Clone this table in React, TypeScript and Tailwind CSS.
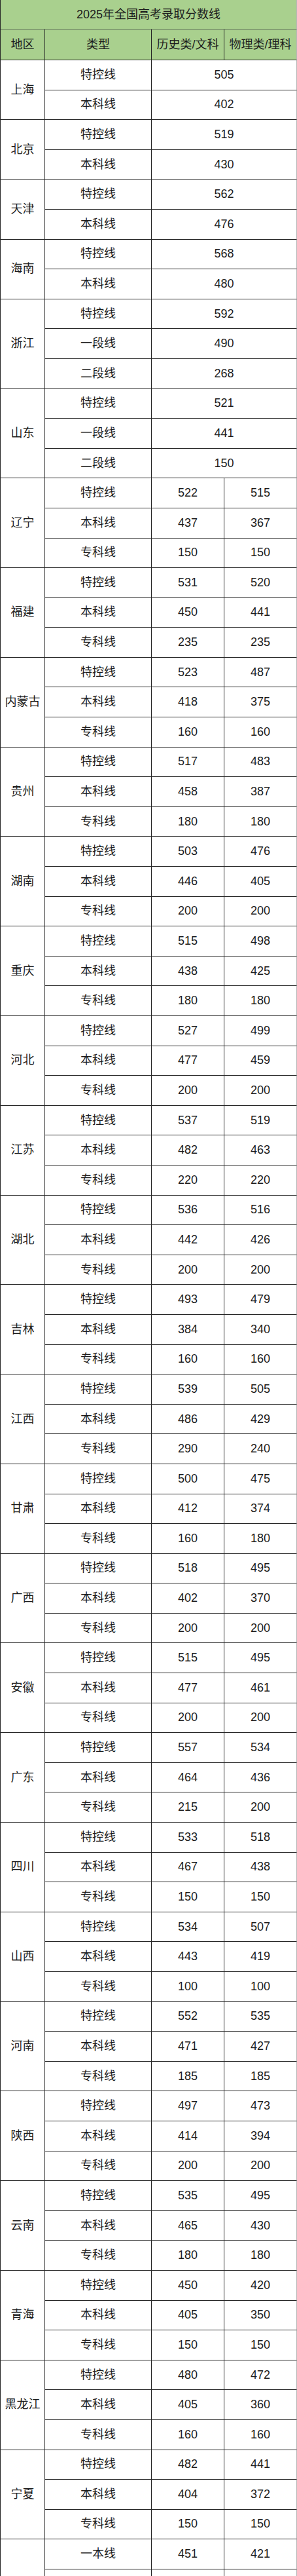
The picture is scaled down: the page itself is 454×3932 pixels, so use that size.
import React from 'react';

type Line = [string, string, string?];
type Region = { name: string; rows: Line[] };

// 前六个地区不分文理，分数合并成一格
const regions: Region[] = [
  { name: '上海', rows: [['特控线', '505'], ['本科线', '402']] },
  { name: '北京', rows: [['特控线', '519'], ['本科线', '430']] },
  { name: '天津', rows: [['特控线', '562'], ['本科线', '476']] },
  { name: '海南', rows: [['特控线', '568'], ['本科线', '480']] },
  { name: '浙江', rows: [['特控线', '592'], ['一段线', '490'], ['二段线', '268']] },
  { name: '山东', rows: [['特控线', '521'], ['一段线', '441'], ['二段线', '150']] },
  { name: '辽宁', rows: [['特控线', '522', '515'], ['本科线', '437', '367'], ['专科线', '150', '150']] },
  { name: '福建', rows: [['特控线', '531', '520'], ['本科线', '450', '441'], ['专科线', '235', '235']] },
  { name: '内蒙古', rows: [['特控线', '523', '487'], ['本科线', '418', '375'], ['专科线', '160', '160']] },
  { name: '贵州', rows: [['特控线', '517', '483'], ['本科线', '458', '387'], ['专科线', '180', '180']] },
  { name: '湖南', rows: [['特控线', '503', '476'], ['本科线', '446', '405'], ['专科线', '200', '200']] },
  { name: '重庆', rows: [['特控线', '515', '498'], ['本科线', '438', '425'], ['专科线', '180', '180']] },
  { name: '河北', rows: [['特控线', '527', '499'], ['本科线', '477', '459'], ['专科线', '200', '200']] },
  { name: '江苏', rows: [['特控线', '537', '519'], ['本科线', '482', '463'], ['专科线', '220', '220']] },
  { name: '湖北', rows: [['特控线', '536', '516'], ['本科线', '442', '426'], ['专科线', '200', '200']] },
  { name: '吉林', rows: [['特控线', '493', '479'], ['本科线', '384', '340'], ['专科线', '160', '160']] },
  { name: '江西', rows: [['特控线', '539', '505'], ['本科线', '486', '429'], ['专科线', '290', '240']] },
  { name: '甘肃', rows: [['特控线', '500', '475'], ['本科线', '412', '374'], ['专科线', '160', '180']] },
  { name: '广西', rows: [['特控线', '518', '495'], ['本科线', '402', '370'], ['专科线', '200', '200']] },
  { name: '安徽', rows: [['特控线', '515', '495'], ['本科线', '477', '461'], ['专科线', '200', '200']] },
  { name: '广东', rows: [['特控线', '557', '534'], ['本科线', '464', '436'], ['专科线', '215', '200']] },
  { name: '四川', rows: [['特控线', '533', '518'], ['本科线', '467', '438'], ['专科线', '150', '150']] },
  { name: '山西', rows: [['特控线', '534', '507'], ['本科线', '443', '419'], ['专科线', '100', '100']] },
  { name: '河南', rows: [['特控线', '552', '535'], ['本科线', '471', '427'], ['专科线', '185', '185']] },
  { name: '陕西', rows: [['特控线', '497', '473'], ['本科线', '414', '394'], ['专科线', '200', '200']] },
  { name: '云南', rows: [['特控线', '535', '495'], ['本科线', '465', '430'], ['专科线', '180', '180']] },
  { name: '青海', rows: [['特控线', '450', '420'], ['本科线', '405', '350'], ['专科线', '150', '150']] },
  { name: '黑龙江', rows: [['特控线', '480', '472'], ['本科线', '405', '360'], ['专科线', '160', '160']] },
  { name: '宁夏', rows: [['特控线', '482', '441'], ['本科线', '404', '372'], ['专科线', '150', '150']] },
  // 最后一块在截图下沿被截断
  { name: '', rows: [['一本线', '451', '421'], ['', '', ''], ['', '', '']] },
];

const cell = 'flex items-center justify-center border-r border-b border-[#262626]';
const lastCell = 'flex items-center justify-center border-r border-b border-r-[#b5b5b5] border-b-[#262626]';

export default function App() {
  return (
    <div
      className="w-[454px] h-[3932px] overflow-hidden bg-white text-[18px] text-[#1c1c1c]"
      style={{ fontFamily: '"Liberation Sans", "Noto Sans CJK SC", sans-serif' }}
    >
      <div className="grid grid-cols-[68px_163px_111px_111px] grid-rows-[45px_47px] auto-rows-[45.6px] border-l border-[#262626]">
        {/* 标题 */}
        <div className="col-span-4 flex items-center justify-center bg-[#a9d08e] border-b border-[#5b6b55] border-r border-r-[#b5b5b5]">
          2025年全国高考录取分数线
        </div>

        {/* 表头 */}
        <div className={cell + ' bg-[#a9d08e]'}>地区</div>
        <div className={cell + ' bg-[#a9d08e]'}>类型</div>
        <div className={cell + ' bg-[#a9d08e]'}>历史类/文科</div>
        <div className={lastCell + ' bg-[#a9d08e]'}>物理类/理科</div>

        {regions.map((r, i) => (
          <React.Fragment key={i}>
            <div className={cell + ' ' + (r.rows.length === 2 ? 'row-span-2' : 'row-span-3')}>{r.name}</div>
            {r.rows.map((row, j) => (
              <React.Fragment key={j}>
                <div className={cell}>{row[0]}</div>
                {row[2] === undefined ? (
                  <div className={lastCell + ' col-span-2'}>{row[1]}</div>
                ) : (
                  <>
                    <div className={cell}>{row[1]}</div>
                    <div className={lastCell}>{row[2]}</div>
                  </>
                )}
              </React.Fragment>
            ))}
          </React.Fragment>
        ))}
      </div>
    </div>
  );
}
